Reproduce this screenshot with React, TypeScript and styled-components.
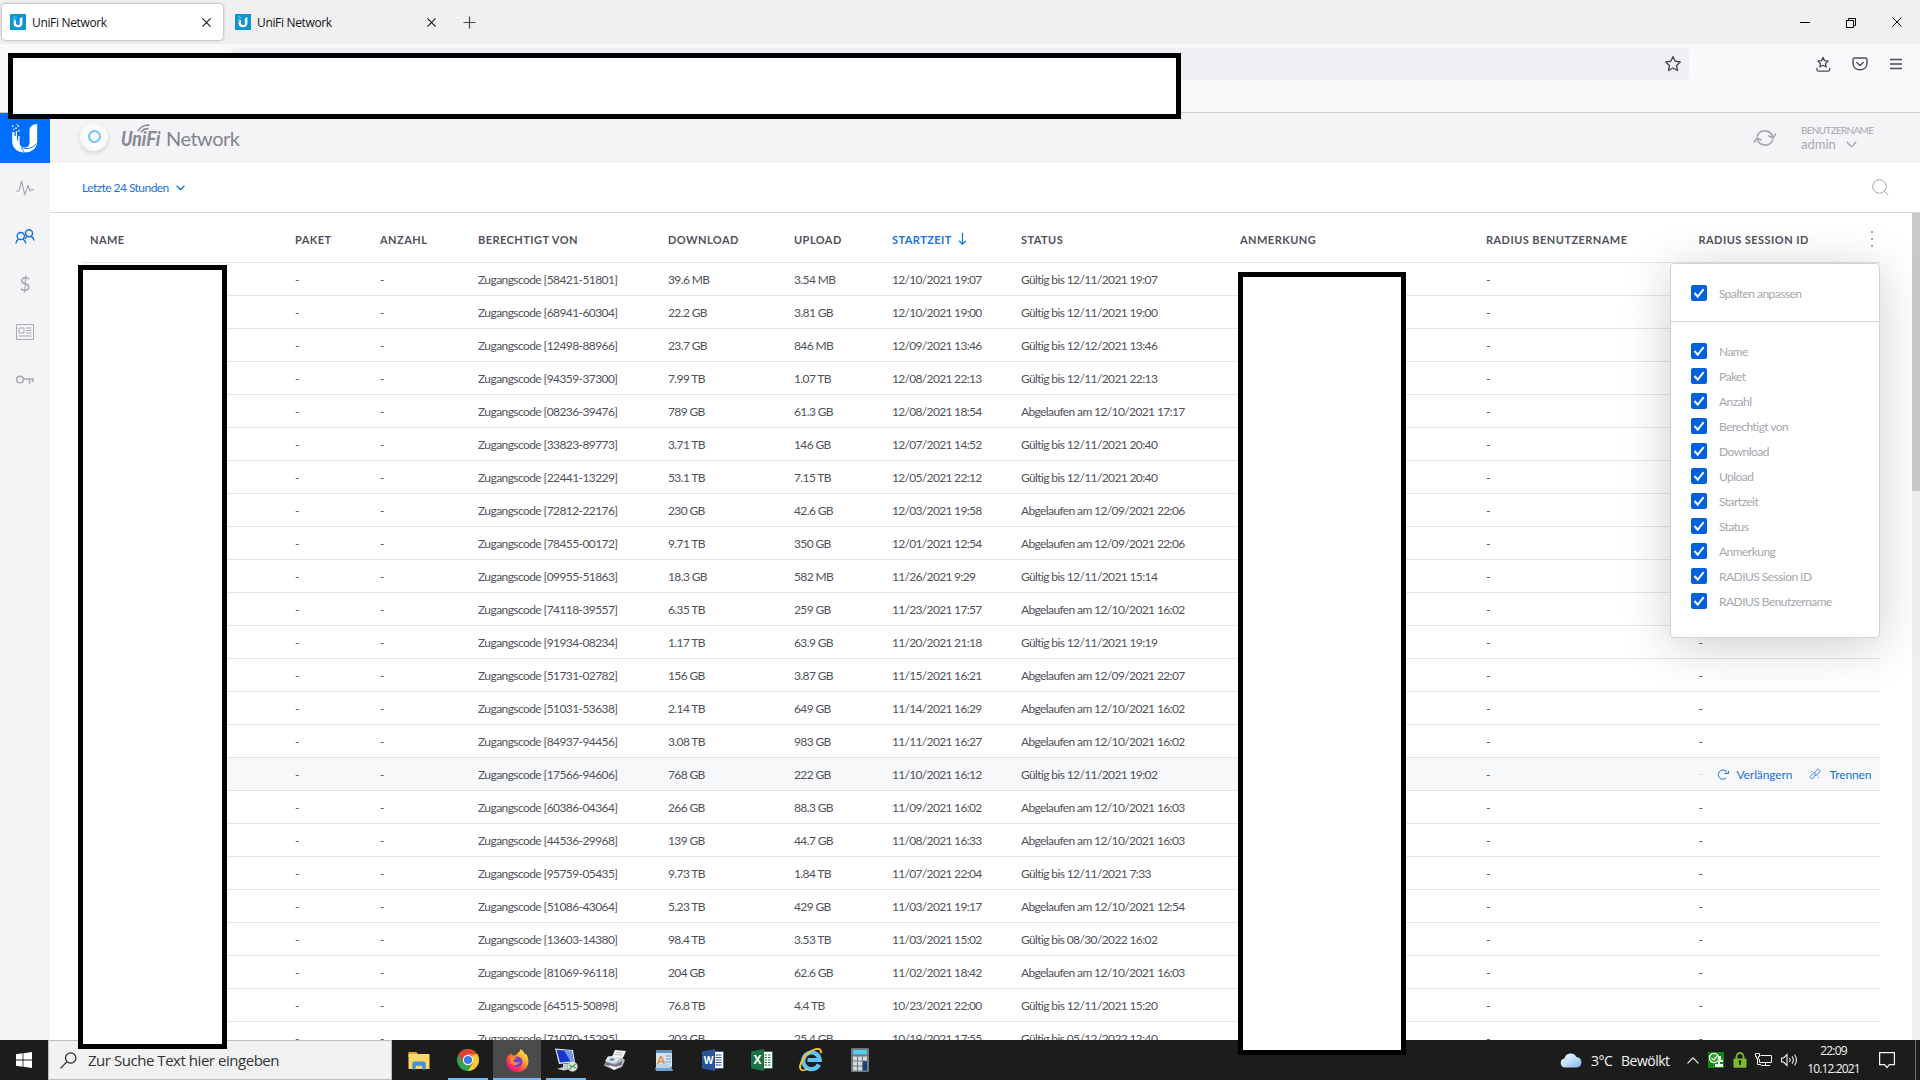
import React from 'react';
import styled, { createGlobalStyle, css } from 'styled-components';

const LATO = 'Lato, "Liberation Sans", sans-serif';
const SEGOE = '"Open Sans", "Noto Sans", sans-serif';

const GlobalStyle = createGlobalStyle`
  * { box-sizing: border-box; }
  html, body { margin: 0; overflow: hidden; }
  body { background: #fff; font-family: ${LATO}; }
  svg { display: block; flex: none; }
`;

const Screen = styled.div`
  position: relative;
  width: 1920px;
  height: 1080px;
  display: flex;
  flex-direction: column;
  overflow: hidden;
  background: #fff;
`;

/* ---------- browser chrome ---------- */

const TabStrip = styled.div`
  height: 44px;
  flex: none;
  display: flex;
  align-items: center;
  gap: 4px;
  padding-left: 2px;
  background: #f0f0f0;
`;

const Tab = styled.div<{ $active?: boolean }>`
  display: flex;
  align-items: center;
  width: 221px;
  height: 36px;
  padding: 0 12px 0 8px;
  border-radius: 4px;
  color: #15141a;
  font: 12px/16px ${SEGOE};
  letter-spacing: -0.34px;
  ${p => p.$active && css`
    background: #fff;
    box-shadow: 0 0 3px rgba(0, 0, 0, 0.42);
  `}
`;

const TabTitle = styled.span`
  flex: 1;
  padding: 2px 0 0 6px;
`;

const NewTab = styled.div`
  padding-left: 11px;
`;

const WindowButtons = styled.div`
  display: flex;
  gap: 36px;
  margin-left: auto;
  padding-right: 18px;
`;

const NavBar = styled.div`
  height: 69px;
  flex: none;
  display: flex;
  align-items: flex-start;
  padding: 4px 17px 0 231px;
  background: #f9f9fb;
  border-bottom: 1px solid #ccc;
  color: #4b4b55;
`;

const AddressBar = styled.div`
  width: 1458px;
  height: 32px;
  display: flex;
  align-items: center;
  justify-content: flex-end;
  padding-right: 7px;
  border-radius: 4px;
  background: #f0f0f4;
`;

const NavIcons = styled.div`
  flex: 1;
  height: 32px;
  display: flex;
  align-items: center;
  justify-content: flex-end;
  gap: 21px;
`;

/* ---------- application ---------- */

const Application = styled.div`
  height: 927px;
  flex: none;
  display: flex;
  overflow: hidden;
`;

const SideBar = styled.nav`
  width: 50px;
  flex: none;
  display: flex;
  flex-direction: column;
  background: #f4f4f6;
`;

const Logo = styled.div`
  height: 50px;
  margin-bottom: 1px;
  display: flex;
  align-items: center;
  justify-content: center;
  background: #006fff;
`;

const SideItem = styled.div`
  height: 48px;
  display: flex;
  align-items: center;
  justify-content: center;
  color: #a9abb3;
`;

const SideDollar = styled.span`
  font: 400 19px/20px ${LATO};
`;

const Main = styled.div`
  flex: 1;
  min-width: 0;
  display: flex;
  flex-direction: column;
`;

const Header = styled.header`
  height: 50px;
  flex: none;
  display: flex;
  align-items: center;
  padding: 0 46px 0 28px;
  background: #f4f4f6;
  color: #808390;
`;

const Brand = styled.div`
  display: flex;
  align-items: center;
  flex: 1;
`;

const Device = styled.div`
  width: 28px;
  height: 28px;
  margin: -3px 2px 0;
  display: flex;
  align-items: center;
  justify-content: center;
  border-radius: 50%;
  background: radial-gradient(circle, #fdfdfe 40%, #f7f7f9 70%);
  box-shadow: 0 2px 4px rgba(0, 0, 0, 0.15);
`;

const DeviceRing = styled.div`
  width: 13px;
  height: 13px;
  border: 2px solid #6cc4f5;
  border-radius: 50%;
`;

const BrandMark = styled.div`
  position: relative;
  width: 40px;
  margin: 1px 0 0 11px;
  font: italic 700 21px/24px Roboto, sans-serif;
  color: #888b96;
`;

const BrandText = styled.span`
  display: block;
  transform: scaleX(0.84);
  transform-origin: left;
`;

const Waves = styled.svg`
  position: absolute;
  left: 16px;
  top: -3px;
`;

const BrandName = styled.span`
  padding-left: 5px;
  font-size: 20px;
  line-height: 24px;
  letter-spacing: -0.5px;
`;

const RefreshBox = styled.div`
  color: #a5a7b1;
`;

const User = styled.div`
  width: 73px;
  margin: -2px 0 0 24px;
  color: #a5a7b1;
`;

const UserLabel = styled.div`
  font-size: 10px;
  line-height: 14px;
  letter-spacing: -0.7px;
`;

const UserName = styled.div`
  display: flex;
  align-items: center;
  gap: 10px;
  font-size: 13px;
  line-height: 15px;
`;

const FilterBar = styled.div`
  height: 50px;
  flex: none;
  display: flex;
  align-items: center;
  justify-content: space-between;
  padding: 0 31px 0 32px;
  border-bottom: 1px solid #d6d7d9;
`;

const Period = styled.div`
  display: flex;
  align-items: center;
  gap: 7px;
  color: #1971dd;
  font-size: 12px;
  letter-spacing: -0.55px;
`;

const Scroll = styled.div`
  flex: 1;
  min-height: 0;
  display: flex;
  justify-content: space-between;
  overflow: hidden;
`;

const Table = styled.div`
  position: relative;
  width: 1798px;
  height: 100%;
  margin-left: 32px;
`;

const columns = css`
  display: grid;
  grid-template-columns: 205px 85px 98px 190px 126px 98px 129px 219px 246px 212.5px 1fr;
  align-items: center;
  padding-left: 8px;
  border-bottom: 1px solid #e4e5e7;
`;

const HeadRow = styled.div`
  ${columns}
  height: 50px;
  color: #50525a;
  font-size: 11px;
  font-weight: 700;
  letter-spacing: 0.45px;
  padding-top: 3px;
`;

const HeadCell = styled.div<{ $sorted?: boolean }>`
  display: flex;
  align-items: center;
  gap: 6px;
  white-space: nowrap;
  color: ${p => (p.$sorted ? '#1971dd' : 'inherit')};
`;

const Row = styled.div<{ $hover?: boolean }>`
  ${columns}
  height: 33px;
  padding-top: 1px;
  color: #50525a;
  background: ${p => (p.$hover ? '#f7f8fa' : 'transparent')};
  font-size: 12px;
  letter-spacing: -0.62px;
`;

const Cell = styled.div<{ $faded?: boolean; $tracking?: number }>`
  position: relative;
  white-space: pre;
  color: ${p => (p.$faded ? '#dcdde1' : 'inherit')};
  ${p => p.$tracking && css`letter-spacing: ${p.$tracking}px;`}
`;

const Dash = styled.i`
  display: block;
  width: 4px;
  height: 1px;
  background: currentColor;
`;

const Actions = styled.div`
  position: absolute;
  left: 18px;
  top: -8px;
  height: 16px;
  display: flex;
  align-items: center;
  color: #1971dd;
  font-size: 12px;
  letter-spacing: -0.1px;
`;

const Action = styled.span`
  display: flex;
  align-items: center;
  gap: 8px;
  margin-right: 17px;
`;

const Menu = styled.div`
  position: absolute;
  left: 1588px;
  top: 50px;
  width: 210px;
  height: 375px;
  border: 1px solid #d2d4d8;
  border-radius: 4px;
  background: #fff;
  box-shadow: 0 8px 48px rgba(20, 22, 40, 0.21);
  color: #a5a7ae;
  font-size: 12px;
  letter-spacing: -0.54px;
`;

const MenuHead = styled.div`
  height: 58px;
  display: flex;
  align-items: center;
  padding-left: 20px;
  border-bottom: 1px solid #d2d4d8;
`;

const MenuList = styled.div`
  padding: 16px 0 0 20px;
`;

const MenuItem = styled.label`
  height: 25px;
  display: flex;
  align-items: center;
`;

const Tick = styled.span`
  width: 16px;
  height: 16px;
  margin-right: 12px;
  border-radius: 2px;
  background: #0061df;
`;

const TickLabel = styled.span`
  padding-top: 1px;
`;

const ScrollTrack = styled.div`
  width: 8px;
  background: #efefef;
`;

const ScrollThumb = styled.div`
  height: 278px;
  background: #c9c9c9;
`;

/* ---------- blanked out areas ---------- */

const Blank = styled.div<{ $x: number; $y: number; $w: number; $h: number }>`
  position: absolute;
  z-index: 5;
  left: ${p => p.$x}px;
  top: ${p => p.$y}px;
  width: ${p => p.$w}px;
  height: ${p => p.$h}px;
  border: 5px solid #000;
  background: #fff;
`;

/* ---------- taskbar ---------- */

const TaskBar = styled.footer`
  height: 40px;
  flex: none;
  display: flex;
  background: #1c1c1c;
  color: #f4f4f4;
  font-family: ${SEGOE};
`;

const Start = styled.div`
  width: 48px;
  display: flex;
  align-items: center;
  justify-content: center;
`;

const SearchBox = styled.div`
  width: 344px;
  display: flex;
  align-items: center;
  gap: 11px;
  padding: 0 0 0 11px;
  border: 1px solid #bdbdbd;
  background: #f1f1f1;
  color: #333;
  font-size: 15px;
  letter-spacing: -0.46px;
`;

const Pinned = styled.div`
  display: flex;
  gap: 1px;
  padding-left: 3px;
`;

const TaskButton = styled.div<{ $state?: 'running' | 'active' }>`
  width: 48px;
  height: 40px;
  display: flex;
  align-items: center;
  justify-content: center;
  background: ${p => (p.$state === 'active' ? '#4b4b4b' : 'transparent')};
  ${p => p.$state && css`
    background-image: linear-gradient(#76b9ed, #76b9ed);
    background-repeat: no-repeat;
    background-position: center bottom;
    background-size: ${p.$state === 'active' ? '48px' : '40px'} 2px;
  `}
`;

const Tray = styled.div`
  display: flex;
  align-items: center;
  margin-left: auto;
  font-size: 14px;
`;

const Weather = styled.div`
  display: flex;
  align-items: center;
  width: 127px;
  white-space: pre;
  letter-spacing: -0.5px;
`;

const Temp = styled.span`
  width: 30px;
  margin-left: 9px;
`;

const TrayIcons = styled.div`
  width: 111px;
  display: flex;
  align-items: center;
  justify-content: space-between;
`;

const Clock = styled.div`
  width: 73px;
  padding-right: 2px;
  text-align: center;
  font-size: 12px;
  line-height: 18px;
  letter-spacing: -0.85px;
`;

const TrayEnd = styled.div`
  width: 45px;
  height: 40px;
  display: flex;
  align-items: center;
  padding-left: 8px;
  border-right: 1px solid #6d6d6d;
  margin-right: 4px;
`;

/* ---------- icons ---------- */

const stroke = { fill: 'none', stroke: 'currentColor' } as const;

const Favicon = () => (
  <svg width="16" height="16" viewBox="0 0 16 16">
    <rect width="16" height="16" fill="#0d94d2" />
    <path d="M3.6 5v4.2c0 2.5 1.8 4 4.4 4s4.4-1.5 4.4-4V3.2c-2 .1-2.6 1-2.6 2.2v4c0 1-.7 1.6-1.8 1.6s-2-.8-2-2V6H5v2H4.400V5z" fill="#fff" />
    <path d="M3.500 2.500h1v1h-1zM5.500 3.500h1v1h-1z" fill="#fff" />
  </svg>
);

const Cross = ({ size = 9, w = 1.2 }) => (
  <svg width={size} height={size} viewBox="0 0 10 10"><path d="M.5.5l9 9M9.500.5l-9 9" stroke="#15141a" strokeWidth={w} /></svg>
);

const Chevron = ({ w = 9, sw = 1.6 }) => (
  <svg width={w} height={w * 0.62} viewBox="0 0 10 6.200" {...stroke} strokeWidth={sw}><path d="M.7.7L5 5.400 9.300.7" /></svg>
);

const Star = () => (
  <svg width="18" height="18" viewBox="0 0 18 18" {...stroke} strokeWidth="1.400" strokeLinejoin="round">
    <path d="M9 1.600l2.200 4.700 5.100.6-3.800 3.500 1 5.100L9 13l-4.500 2.500 1-5.100L1.700 6.900l5.100-.6z" />
  </svg>
);

const Download = () => (
  <svg width="15" height="17" viewBox="0 0 15 17" {...stroke} strokeWidth="1.300" strokeLinejoin="round" strokeLinecap="round">
    <path d="M7 1.400l1.500 3.200 3.600.4-2.600 2.400.7 3.600L7 9.300l-3.200 1.700.7-3.600L1.900 5l3.600-.4z" />
    <path d="M.9 12.300v1.200c0 1 .7 1.700 1.700 1.700h9.300c1 0 1.700-.7 1.700-1.700v-1.200" />
  </svg>
);

const Pocket = () => (
  <svg width="16" height="16" viewBox="0 0 16 16" {...stroke} strokeWidth="1.400" strokeLinecap="round">
    <path d="M3 2h10c1.300 0 2 .7 2 1.800v3.400c0 4-3 6.500-7 6.500S1 11.200 1 7.200V3.800C1 2.700 1.700 2 3 2z" />
    <path d="M4.800 6.500L8 9.500l3.200-3" />
  </svg>
);

const Burger = () => (
  <svg width="14" height="12" viewBox="0 0 14 12" {...stroke} strokeWidth="1.300"><path d="M1 1.500h12M1 6h12M1 10.500h12" /></svg>
);

const UbntLogo = () => (
  <svg width="28" height="30" viewBox="0 0 28 30">
    <path d="M1.200 9v9.500c0 6.500 5.200 11 12.500 11 7 0 12.500-4.300 12.500-11V1c-5 .3-7.700 2.500-7.700 6.800v12c0 3-1.700 4.700-4.700 4.700-2.800 0-5.200-1.700-5.200-4.700V13H7.200v4.500H6V8H4.800v5H3.500V9z" fill="#fff" />
    <path d="M10.500 24.500c4 2 11 1.500 15-4M10 25l3.500 4.500" stroke="#006fff" strokeWidth=".9" fill="none" />
    <path d="M1 2.200h1.500v1.500H1zM4.200 4.500h1.500V6H4.200zM6.500 2.500H8V4H6.500zM2 5.800h1.300v1.300H2zM7.200 7h1.500v1.500H7.200zM5.500 1h1v1h-1z" fill="#fff" />
  </svg>
);

const Pulse = () => (
  <svg width="18" height="16" viewBox="0 0 18 16" {...stroke} strokeWidth="1.200" strokeLinejoin="round"><path d="M0 11h3L5.500.8l3.300 14L12 5.500l2 5.500 1.300-1.300H18" /></svg>
);

const Users = () => (
  <svg width="20" height="15" viewBox="0 0 20 15" fill="none" stroke="#1971dd" strokeWidth="1.500">
    <circle cx="5.800" cy="7" r="3.600" /><path d="M.9 14.500c.2-2 1.200-3.500 2.700-4.300M10.700 14.500c-.2-2-1.200-3.500-2.700-4.300" />
    <circle cx="14" cy="4.200" r="3.500" /><path d="M10.300 10c.3-1.200 1-2.300 2-3M19 11.500c-.2-2-1.300-3.500-3-4.300" />
  </svg>
);

const News = () => (
  <svg width="18" height="16" viewBox="0 0 18 16" {...stroke}>
    <path d="M.5.500h17v15H.5z" /><path d="M3 4h5v5H3zM10 4h5.500M10 6.500h5.500M10 9h5.500M2.500 12h13" />
  </svg>
);

const Key = () => (
  <svg width="18" height="10" viewBox="0 0 18 10" {...stroke} strokeWidth="1.500">
    <circle cx="4" cy="4.500" r="3.300" /><path d="M7.500 4h10.500M13.500 4v5M16.700 4v3" />
  </svg>
);

const Refresh = () => (
  <svg width="24" height="20" viewBox="0 0 24 20" {...stroke} strokeWidth="1.600">
    <path d="M4 8.500A8.200 8.200 0 0 1 19.700 9M20 11.500A8.200 8.200 0 0 1 4.300 11" />
    <path d="M15.500 7.700l4.500 2.200 3-4.400M8.500 12.300L4 10.100l-3 4.400" />
  </svg>
);

const Magnifier = () => (
  <svg width="17" height="17" viewBox="0 0 17 17" fill="none" stroke="#a0a2a8" strokeWidth="1"><circle cx="7.500" cy="7.500" r="6.800" /><path d="M12.300 12.300l4 4" /></svg>
);

const SortArrow = () => (
  <svg width="9" height="12" viewBox="0 0 9 12" {...stroke} strokeWidth="1.200"><path d="M4.500 0v11M1 7.800l3.500 3.400L8 7.800" /></svg>
);

const Dots = styled.svg`
  position: absolute;
  left: 1788px;
  top: 17px;
`;

const Check = () => (
  <svg width="16" height="16" viewBox="0 0 16 16" fill="none" stroke="#fff" strokeWidth="2"><path d="M3.500 8l3.200 3.600 6-7.400" /></svg>
);

const Renew = () => (
  <svg width="12" height="11" viewBox="0 0 12 11" {...stroke} strokeWidth="1"><path d="M9 9a4.600 4.600 0 1 1 1-5.500M7.500 4.500h4V2" /></svg>
);

const Unlink = () => (
  <svg width="12" height="12" viewBox="0 0 12 12" {...stroke} strokeWidth=".8">
    <path d="M5 5l3.300-3.500c1-.9 3.400.7 2.300 2.300L8 7C7 8 5.500 7.500 5 6.500M7 6.500L4 10.300c-1 1.200-3.400-.3-2.500-1.900L4 5.300c1-.9 2.500-.3 3 .700M2 3l1 1M9 9l1 1" />
  </svg>
);

const Windows = () => (
  <svg width="16" height="16" viewBox="0 0 16 16" fill="#fff"><path d="M0 2.300l6.600-1v6.300H0zM7.400 1.200L16 0v7.600H7.400zM0 8.400h6.600v6.300L0 13.800zM7.400 8.400H16V16l-8.600-1.200z" /></svg>
);

const TaskSearch = () => (
  <svg width="17" height="17" viewBox="0 0 17 17" fill="none" stroke="#222" strokeWidth="1.200"><circle cx="10.700" cy="6" r="5.200" /><path d="M7 9.700L.6 16.400" /></svg>
);

const Explorer = () => (
  <svg width="22" height="19" viewBox="0 0 22 19">
    <path d="M.5 1h8l1.500 2v3H.5z" fill="#e2a336" /><path d="M.5 3h21v15H.5z" fill="#fcd667" />
    <path d="M4.300 18.500v-6a2 2 0 0 1 2-2h9.400a2 2 0 0 1 2 2v6h-3.400v-3.700H7.700v3.700z" fill="#4193d6" />
  </svg>
);

const Chrome = () => (
  <svg width="22" height="22" viewBox="0 0 22 22">
    <circle cx="11" cy="11" r="11" fill="#33a352" />
    <path d="M1.500 5.500A11 11 0 0 1 20.500 5.500L11 6.500 6.200 13.700z" fill="#e34133" />
    <path d="M20.500 5.500A11 11 0 0 1 11 22l4.800-8.300-.8-7.200z" fill="#fcc934" />
    <path d="M11 6h9.800l-.3-.5H11z" fill="#fcc934" />
    <circle cx="11" cy="11" r="5.200" fill="#fff" /><circle cx="11" cy="11" r="4.100" fill="#3f7ee8" />
  </svg>
);

const Firefox = () => (
  <svg width="23" height="23" viewBox="0 0 23 23">
    <defs>
      <linearGradient id="fox" x1=".85" y1=".1" x2=".2" y2=".9"><stop offset="0" stopColor="#ffe848" /><stop offset=".4" stopColor="#ff9a2a" /><stop offset=".75" stopColor="#ff3b4e" /><stop offset="1" stopColor="#e31587" /></linearGradient>
    </defs>
    <path d="M14.500 0c3 1.800 4 4 4.200 5.500l1.300-.8c2 3 2.800 6 2.300 9C21.500 19.500 17 23 11.500 23 5 23 .3 18.500.3 12.300.3 9.500 1.500 7 2.800 5.500l.4 1.600C4 5 5.300 4.300 5.500 4.200l.3 2 3.700.2C11 4.500 13.800 3.500 14.500 0z" fill="url(#fox)" />
    <circle cx="11.300" cy="12.800" r="5.200" fill="#7040d8" />
    <path d="M4.500 8.500c2-1.500 4.500-.5 6 .8-1 1.500-2.800 1.300-3.300 2 .5 2.400 4.300 3.200 6.800 1.200-1 3.800-7.500 5.500-9.800 1z" fill="#ff8a1e" />
  </svg>
);

const RemoteDesk = () => (
  <svg width="24" height="24" viewBox="0 0 24 24">
    <path d="M1 .5l18 1.500 2 12.500L5 16z" fill="#dfe6ee" /><path d="M2.500 1.800l15.300 1.200 1.700 10.300L6 14.500z" fill="#1b35c9" /><path d="M10 2.400l7.800.6 1.700 10.300-3 .3z" fill="#7297ee" />
    <path d="M9 16l6-.5 1 3.500 3 1.500-9 2-7-1.500 6-2z" fill="#c8ccd2" />
    <circle cx="18.500" cy="18.500" r="5" fill="#dfe5df" stroke="#8b918b" strokeWidth=".6" /><path d="M15.500 17l2.500 2-2.500 2M21.500 16l-2.500 2 2.500 2" fill="none" stroke="#2f9e3c" strokeWidth="1.200" />
  </svg>
);

const Printer = () => (
  <svg width="24" height="22" viewBox="0 0 24 20">
    <path d="M12 0l11 1-4 9-11-1z" fill="#f5f6f7" /><path d="M13 2.500l7 .6M12 4.500l7 .6" stroke="#b4bac2" />
    <path d="M5 6.500L19 8l3 2-3 7-8 3-10-4.500z" fill="#b9bdc3" /><path d="M5 6.500l5-.5 7 3-6 4-9-2z" fill="#e4e7ea" /><path d="M3 12l9 2.700 7-4v4l-7.500 3L2 14.500z" fill="#70767e" /><path d="M5 15l8 2 5-2-7 5z" fill="#fff" />
    <path d="M8 8l4 1-2 2-4-.8z" fill="#4d92c9" />
  </svg>
);

const NotePad = () => (
  <svg width="18" height="21" viewBox="0 0 18 21">
    <path d="M1 1h16v16H1z" fill="#cfe3f3" /><path d="M1 0h16v3H1z" fill="#5c93be" /><path d="M11 6h5M11 9h5M10 12h6" stroke="#7b9dbb" /><path d="M0 17.500l16-1.500 2 5H1z" fill="#6fa3cc" /><path d="M1 14h13l2 4H1z" fill="#b9d3e8" />
    <text x="2" y="13.500" fill="#f08a24" fontFamily="Lato" fontWeight="700" fontSize="12">A</text>
  </svg>
);

const Office = ({ color, letter }: { color: string; letter: string }) => (
  <svg width="22" height="22" viewBox="0 0 22 22">
    <path d="M11 2.500h10.500v17H11z" fill="#fff" stroke={color} strokeWidth=".8" />
    <path d="M13.500 6h6M13.500 8.500h6M13.500 11h6M13.500 13.500h6M13.500 16h6" stroke={color} strokeWidth="1.200" />
    {letter === 'X' && <path d="M16.500 4v14" stroke="#fff" />}
    <path d="M0 2.500L13 0v22L0 19.500z" fill={color} />
    <text x="6.500" y="15" fill="#fff" textAnchor="middle" fontFamily="Open Sans" fontWeight="700" fontSize={letter === 'W' ? 10 : 12}>{letter}</text>
  </svg>
);

const InternetExplorer = () => (
  <svg width="24" height="24" viewBox="0 0 24 24">
    <path d="M20 16.500a8.300 8.300 0 1 1 .8-4.500H8.500" fill="none" stroke="#5cc3f4" strokeWidth="4.200" />
    <path d="M2.500 22C-2 19 6 4 16 1.300c4.500-1.200 6.700.6 5.700 4M2.500 22c1.500.8 4 0 6-1" fill="none" stroke="#f8c32a" strokeWidth="1.900" />
  </svg>
);

const Calculator = () => (
  <svg width="18" height="24" viewBox="0 0 18 24">
    <rect width="18" height="24" rx="1" fill="#71797f" /><rect x="2" y="2" width="14" height="4.500" fill="#56cdf0" />
    <path d="M2 8.500h4v4H2zM7 8.500h4v4H7zM12 8.500h4v4h-4zM2 13.500h4v4H2zM7 13.500h4v4H7zM2 18.500h4v4H2zM7 18.500h4v4H7z" fill="#d5d9dc" /><path d="M12 13.500h4v9h-4z" fill="#14427f" />
  </svg>
);

const Cloud = () => (
  <svg width="22" height="16" viewBox="0 0 22 16">
    <defs><linearGradient id="cl" x2="1" y2="1"><stop offset="0" stopColor="#eef7ff" /><stop offset=".5" stopColor="#c1defa" /><stop offset="1" stopColor="#7eb4ea" /></linearGradient></defs>
    <path d="M5 15.500a4.600 4.600 0 0 1-.6-9.100A6.500 6.500 0 0 1 16.500 5a5.300 5.300 0 0 1 .5 10.500z" fill="url(#cl)" />
  </svg>
);

const Caret = () => (
  <svg width="12" height="7" viewBox="0 0 12 7" {...stroke} strokeWidth="1.200"><path d="M.5 6.400L6 .9l5.500 5.500" /></svg>
);

const Shield = () => (
  <svg width="16" height="16" viewBox="0 0 16 16">
    <rect width="16" height="16" fill="#118a13" /><circle cx="6" cy="6" r="4.600" fill="#28a428" stroke="#fff" strokeWidth="1.200" /><path d="M3.500 6L5.600 8l4.400-5" fill="none" stroke="#fff" strokeWidth="1.200" />
    <path d="M11 4h2v4h2v2h-3v2h3v3H7v-3h3V9h1z" fill="#e9f7e9" />
  </svg>
);

const Lock = () => (
  <svg width="14" height="16" viewBox="0 0 14 16">
    <path d="M3.500 7V4.500a3.500 3.500 0 0 1 7 0V7" fill="none" stroke="#7cbb2f" strokeWidth="1.800" /><rect x=".5" y="6.500" width="13" height="9.300" rx="1" fill="#7cbb2f" />
    <path d="M6.200 9.500h1.600v3.500H6.200z" fill="#1c1c1c" /><circle cx="7" cy="9.700" r="1.400" fill="#1c1c1c" />
  </svg>
);

const Network = () => (
  <svg width="17" height="14" viewBox="0 0 17 14" {...stroke}><path d="M5.500 2.500h11v7h-12V6M10.500 9.500v3M6 12.500h9M.5.500h4v3h-1v2h-2v-2h-1zM2.500 6v5.500H6" /></svg>
);

const Speaker = () => (
  <svg width="17" height="14" viewBox="0 0 17 14" {...stroke} strokeWidth="1.100"><path d="M.6 5h2L6 1.500v11L2.600 9h-2zM8.500 5c.9 1.200.9 2.800 0 4M11 3.300c1.700 2.200 1.700 5.200 0 7.400M13.500 1.500c2.600 3.200 2.600 7.800 0 11" /></svg>
);

const Notice = () => (
  <svg width="16" height="17" viewBox="0 0 16 17" {...stroke} strokeWidth="1.200"><path d="M.6.600h14.800v12h-5L8 15.500l-2.400-2.900h-5z" /></svg>
);

/* ---------- data ---------- */

const HEADINGS = ['NAME', 'PAKET', 'ANZAHL', 'BERECHTIGT VON', 'DOWNLOAD', 'UPLOAD', 'STARTZEIT', 'STATUS', 'ANMERKUNG', 'RADIUS BENUTZERNAME', 'RADIUS SESSION ID'];

const valid = (d: string) => `Gültig bis ${d}`;
const expired = (d: string) => `Abgelaufen am ${d}`;

const VOUCHERS = [
  ['58421-51801', '39.6 MB', '3.54 MB', '12/10/2021 19:07', valid('12/11/2021 19:07')],
  ['68941-60304', '22.2 GB', '3.81 GB', '12/10/2021 19:00', valid('12/11/2021 19:00')],
  ['12498-88966', '23.7 GB', '846 MB', '12/09/2021 13:46', valid('12/12/2021 13:46')],
  ['94359-37300', '7.99 TB', '1.07 TB', '12/08/2021 22:13', valid('12/11/2021 22:13')],
  ['08236-39476', '789 GB', '61.3 GB', '12/08/2021 18:54', expired('12/10/2021 17:17')],
  ['33823-89773', '3.71 TB', '146 GB', '12/07/2021 14:52', valid('12/11/2021 20:40')],
  ['22441-13229', '53.1 TB', '7.15 TB', '12/05/2021 22:12', valid('12/11/2021 20:40')],
  ['72812-22176', '230 GB', '42.6 GB', '12/03/2021 19:58', expired('12/09/2021 22:06')],
  ['78455-00172', '9.71 TB', '350 GB', '12/01/2021 12:54', expired('12/09/2021 22:06')],
  ['09955-51863', '18.3 GB', '582 MB', '11/26/2021 9:29', valid('12/11/2021 15:14')],
  ['74118-39557', '6.35 TB', '259 GB', '11/23/2021 17:57', expired('12/10/2021 16:02')],
  ['91934-08234', '1.17 TB', '63.9 GB', '11/20/2021 21:18', valid('12/11/2021 19:19')],
  ['51731-02782', '156 GB', '3.87 GB', '11/15/2021 16:21', expired('12/09/2021 22:07')],
  ['51031-53638', '2.14 TB', '649 GB', '11/14/2021 16:29', expired('12/10/2021 16:02')],
  ['84937-94456', '3.08 TB', '983 GB', '11/11/2021 16:27', expired('12/10/2021 16:02')],
  ['17566-94606', '768 GB', '222 GB', '11/10/2021 16:12', valid('12/11/2021 19:02')],
  ['60386-04364', '266 GB', '88.3 GB', '11/09/2021 16:02', expired('12/10/2021 16:03')],
  ['44536-29968', '139 GB', '44.7 GB', '11/08/2021 16:33', expired('12/10/2021 16:03')],
  ['95759-05435', '9.73 TB', '1.84 TB', '11/07/2021 22:04', valid('12/11/2021 7:33')],
  ['51086-43064', '5.23 TB', '429 GB', '11/03/2021 19:17', expired('12/10/2021 12:54')],
  ['13603-14380', '98.4 TB', '3.53 TB', '11/03/2021 15:02', valid('08/30/2022 16:02')],
  ['81069-96118', '204 GB', '62.6 GB', '11/02/2021 18:42', expired('12/10/2021 16:03')],
  ['64515-50898', '76.8 TB', '4.4 TB', '10/23/2021 22:00', valid('12/11/2021 15:20')],
  ['71070-15295', '203 GB', '25.4 GB', '10/19/2021 17:55', valid('05/12/2022 12:40')],
];

const SELECTED = '17566-94606';

const MENU = ['Name', 'Paket', 'Anzahl', 'Berechtigt von', 'Download', 'Upload', 'Startzeit', 'Status', 'Anmerkung', 'RADIUS Session ID', 'RADIUS Benutzername'];

/* ---------- page ---------- */

const BrowserTab = ({ active }: { active?: boolean }) => (
  <Tab $active={active}><Favicon /><TabTitle>UniFi Network</TabTitle><Cross /></Tab>
);

const VoucherRow = ({ data }: { data: string[] }) => {
  const [code, down, up, start, status] = data;
  const hover = code === SELECTED;
  return (
    <Row $hover={hover}>
      <Cell />
      <Cell>-</Cell>
      <Cell>-</Cell>
      <Cell $tracking={-0.58}>Zugangscode [{code}]</Cell>
      <Cell>{down}</Cell>
      <Cell>{up}</Cell>
      <Cell $tracking={-0.68}>{start}</Cell>
      <Cell>{status}</Cell>
      <Cell />
      <Cell>-</Cell>
      {hover ? (
        <Cell $faded>
          <Dash />
          <Actions><Action><Renew />Verlängern</Action><Action><Unlink />Trennen</Action></Actions>
        </Cell>
      ) : <Cell>-</Cell>}
    </Row>
  );
};

const MenuCheck = ({ label }: { label: string }) => (
  <MenuItem><Tick><Check /></Tick><TickLabel>{label}</TickLabel></MenuItem>
);

export default function App() {
  return (
    <Screen>
      <GlobalStyle />
      <TabStrip>
        <BrowserTab active />
        <BrowserTab />
        <NewTab>
          <svg width="13" height="13" viewBox="0 0 13 13" stroke="#4a4a50" strokeWidth="1.200"><path d="M6.500.5v12M.5 6.500h12" /></svg>
        </NewTab>
        <WindowButtons>
          <svg width="10" height="11" viewBox="0 0 10 11"><path d="M0 5.500h10" stroke="#000" /></svg>
          <svg width="10" height="11" viewBox="0 0 10 11" fill="none" stroke="#000"><path d="M.5 3.500h7v7h-7zM2.500 3V1.500h7v7h-2" /></svg>
          <Cross size={10} w={1} />
        </WindowButtons>
      </TabStrip>
      <NavBar>
        <AddressBar><Star /></AddressBar>
        <NavIcons><Download /><Pocket /><Burger /></NavIcons>
      </NavBar>

      <Application>
        <SideBar>
          <Logo><UbntLogo /></Logo>
          <SideItem><Pulse /></SideItem>
          <SideItem><Users /></SideItem>
          <SideItem><SideDollar>$</SideDollar></SideItem>
          <SideItem><News /></SideItem>
          <SideItem><Key /></SideItem>
        </SideBar>
        <Main>
          <Header>
            <Brand>
              <Device><DeviceRing /></Device>
              <BrandMark>
                <BrandText>UniFi</BrandText>
                <Waves width="14" height="10" viewBox="0 0 14 10" fill="none" stroke="#888b96" strokeWidth="1.600">
                  <path d="M1 7.500C2.500 3.500 7 .8 12.500 1.200M4 8.500c1.300-2.500 4-4 7.500-3.900" />
                </Waves>
              </BrandMark>
              <BrandName>Network</BrandName>
            </Brand>
            <RefreshBox><Refresh /></RefreshBox>
            <User>
              <UserLabel>BENUTZERNAME</UserLabel>
              <UserName>admin<Chevron w={11} sw={1.3} /></UserName>
            </User>
          </Header>
          <FilterBar>
            <Period>Letzte 24 Stunden<Chevron /></Period>
            <Magnifier />
          </FilterBar>
          <Scroll>
            <Table>
              <HeadRow>
                {HEADINGS.map(h => (
                  <HeadCell key={h} $sorted={h === 'STARTZEIT'}>{h}{h === 'STARTZEIT' && <SortArrow />}</HeadCell>
                ))}
              </HeadRow>
              {VOUCHERS.map(v => <VoucherRow key={v[0]} data={v} />)}
              <Dots width="4" height="18" viewBox="0 0 4 18" fill="#a5a7ae">
                <path d="M1 1h2v2H1zM1 8h2v2H1zM1 15h2v2H1z" />
              </Dots>
              <Menu>
                <MenuHead><MenuCheck label="Spalten anpassen" /></MenuHead>
                <MenuList>{MENU.map(m => <MenuCheck key={m} label={m} />)}</MenuList>
              </Menu>
            </Table>
            <ScrollTrack><ScrollThumb /></ScrollTrack>
          </Scroll>
        </Main>
      </Application>

      <TaskBar>
        <Start><Windows /></Start>
        <SearchBox><TaskSearch />Zur Suche Text hier eingeben</SearchBox>
        <Pinned>
          <TaskButton><Explorer /></TaskButton>
          <TaskButton $state="running"><Chrome /></TaskButton>
          <TaskButton $state="active"><Firefox /></TaskButton>
          <TaskButton $state="running"><RemoteDesk /></TaskButton>
          <TaskButton><Printer /></TaskButton>
          <TaskButton><NotePad /></TaskButton>
          <TaskButton><Office color="#2a5699" letter="W" /></TaskButton>
          <TaskButton><Office color="#1e7145" letter="X" /></TaskButton>
          <TaskButton><InternetExplorer /></TaskButton>
          <TaskButton><Calculator /></TaskButton>
        </Pinned>
        <Tray>
          <Weather><Cloud /><Temp>3°C</Temp>Bewölkt</Weather>
          <TrayIcons><Caret /><Shield /><Lock /><Network /><Speaker /></TrayIcons>
          <Clock>22:09<br />10.12.2021</Clock>
          <TrayEnd><Notice /></TrayEnd>
        </Tray>
      </TaskBar>

      <Blank $x={8} $y={53} $w={1173} $h={66} />
      <Blank $x={78} $y={265} $w={149} $h={784} />
      <Blank $x={1238} $y={272} $w={168} $h={783} />
    </Screen>
  );
}
